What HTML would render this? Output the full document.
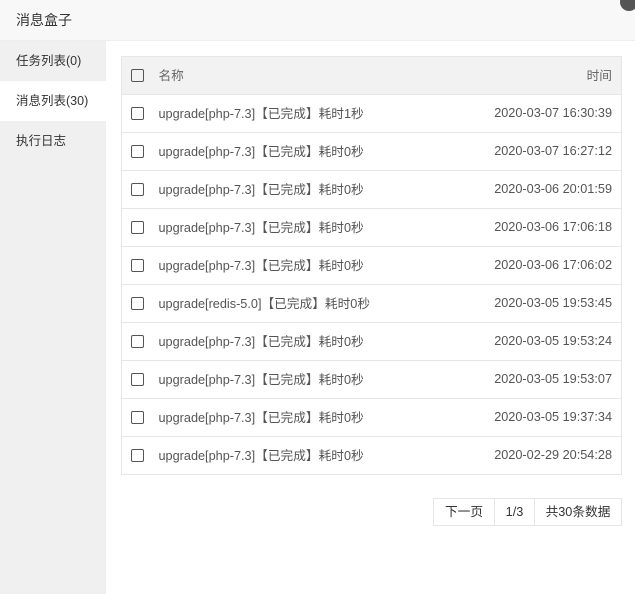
<!DOCTYPE html><html><head><style>
*{margin:0;padding:0;box-sizing:border-box}
body{width:635px;height:594px;background:#fff;font-family:"Liberation Sans","Noto Sans CJK SC",sans-serif;font-size:12.7px;color:#555;position:relative;overflow:hidden}
.hd{position:absolute;left:0;top:0;width:635px;height:41px;background:#f8f8f8;border-bottom:1px solid #eee;font-size:14px;color:#333;line-height:40px;padding-left:16px}
.close{position:absolute;left:620px;top:-7px;width:18px;height:18px;border-radius:50%;background:#555}
.sb{position:absolute;left:0;top:41px;width:106px;height:553px;background:#f0f0f0}
.sb div{height:40px;line-height:40px;padding-left:16px;color:#333;font-size:12.5px}
.sb .on{background:#fff}
table{position:absolute;left:121px;top:56px;width:501px;border-collapse:collapse;border:1px solid #e6e6e6}
td{border-top:1px solid #e6e6e6;height:38px;padding:0 0 2px 0;color:#555}
tr.h td{background:#f2f2f2;height:38px;color:#666;border-top:none}
.cb{width:37px;padding-left:9px}
.cb span{display:inline-block;width:13px;height:13px;border:1px solid #555;border-radius:2px;vertical-align:middle}
.t{text-align:right;padding-right:9px}
.pg{position:absolute;left:433px;top:498px;height:28px;border:1px solid #e6e6e6;display:flex;line-height:26px;color:#333}
.pg span{border-left:1px solid #e6e6e6;text-align:center}
.pg span:nth-child(1){border-left:none;width:60px}
.pg span:nth-child(2){width:40px}
.pg span:nth-child(3){width:87px}
</style></head><body>
<div class="hd">消息盒子</div><div class="close"></div>
<div class="sb"><div>任务列表(0)</div><div class="on">消息列表(30)</div><div>执行日志</div></div>
<table>
<tr class="h"><td class="cb"><span></span></td><td>名称</td><td class="t">时间</td></tr>
<tr><td class="cb"><span></span></td><td>upgrade[php-7.3]【已完成】耗时1秒</td><td class="t">2020-03-07 16:30:39</td></tr>
<tr><td class="cb"><span></span></td><td>upgrade[php-7.3]【已完成】耗时0秒</td><td class="t">2020-03-07 16:27:12</td></tr>
<tr><td class="cb"><span></span></td><td>upgrade[php-7.3]【已完成】耗时0秒</td><td class="t">2020-03-06 20:01:59</td></tr>
<tr><td class="cb"><span></span></td><td>upgrade[php-7.3]【已完成】耗时0秒</td><td class="t">2020-03-06 17:06:18</td></tr>
<tr><td class="cb"><span></span></td><td>upgrade[php-7.3]【已完成】耗时0秒</td><td class="t">2020-03-06 17:06:02</td></tr>
<tr><td class="cb"><span></span></td><td>upgrade[redis-5.0]【已完成】耗时0秒</td><td class="t">2020-03-05 19:53:45</td></tr>
<tr><td class="cb"><span></span></td><td>upgrade[php-7.3]【已完成】耗时0秒</td><td class="t">2020-03-05 19:53:24</td></tr>
<tr><td class="cb"><span></span></td><td>upgrade[php-7.3]【已完成】耗时0秒</td><td class="t">2020-03-05 19:53:07</td></tr>
<tr><td class="cb"><span></span></td><td>upgrade[php-7.3]【已完成】耗时0秒</td><td class="t">2020-03-05 19:37:34</td></tr>
<tr><td class="cb"><span></span></td><td>upgrade[php-7.3]【已完成】耗时0秒</td><td class="t">2020-02-29 20:54:28</td></tr>
</table>
<div class="pg"><span>下一页</span><span>1/3</span><span>共30条数据</span></div>
</body></html>
